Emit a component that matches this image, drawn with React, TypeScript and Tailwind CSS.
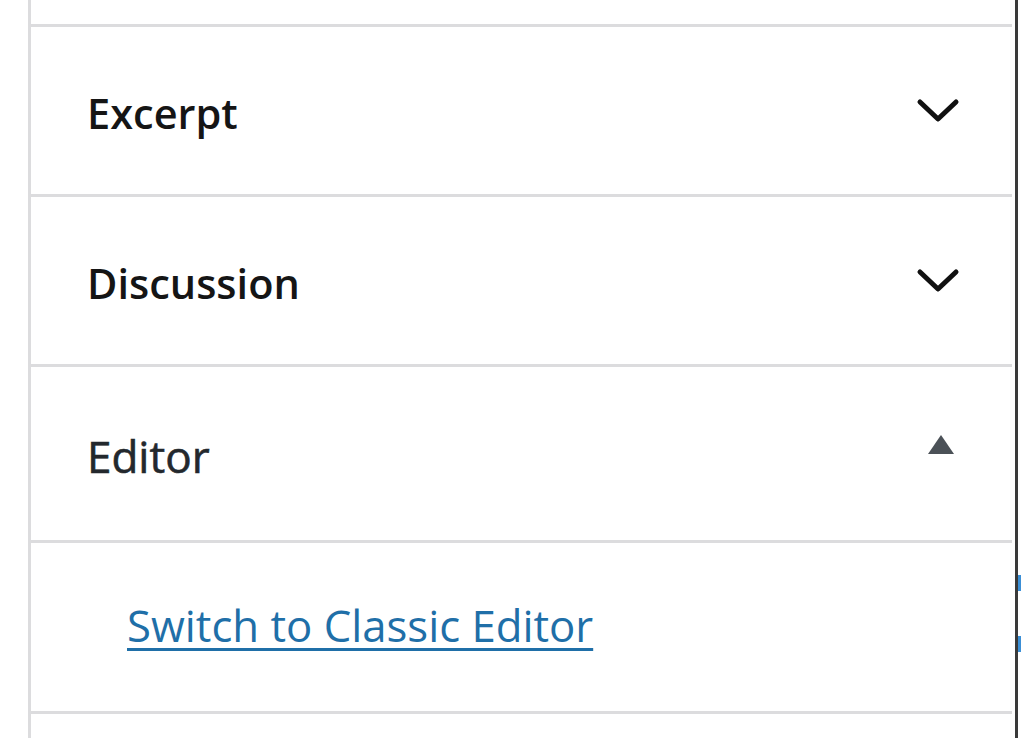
import { ReactNode } from "react"

const font = { fontFamily: '"Open Sans", "Noto Sans", "Liberation Sans", sans-serif' }

function Chevron() {
  return (
    <svg width="44" height="26" viewBox="0 0 44 26" className="shrink-0">
      <path d="M4 4 L22 21 L40 4" fill="none" stroke="#111" strokeWidth="5" strokeLinecap="round" strokeLinejoin="round" />
    </svg>
  )
}

function Triangle() {
  return (
    <svg width="30" height="22" viewBox="0 0 30 22" className="shrink-0">
      <path d="M15 2 L28 21 L2 21 Z" fill="#4b5157" />
    </svg>
  )
}

function PanelRow({ title, icon }: { title: string; icon: ReactNode }) {
  return (
    <div className="h-[170px] shrink-0 flex items-center justify-between pl-[56px] pr-[52px] border-b-[3px] border-[#dcdcde]">
      <span className="text-[41.5px] font-semibold text-[#151515] pt-[5px]">{title}</span>
      {icon}
    </div>
  )
}

export default function App() {
  return (
    <div className="w-[1024px] h-[738px] overflow-hidden bg-white flex" style={font}>
      <div className="w-[28px] shrink-0" />
      <div className="w-[984px] shrink-0 flex flex-col border-l-[3px] border-[#dcdcde]">
        <div className="h-[27px] shrink-0 border-b-[3px] border-[#dcdcde]" />
        <PanelRow title="Excerpt" icon={<Chevron />} />
        <PanelRow title="Discussion" icon={<Chevron />} />
        <div className="h-[176px] shrink-0 flex items-center justify-between pl-[56px] pr-[56px] border-b-[3px] border-[#dcdcde]">
          <span className="text-[44px] text-[#23282d] pt-[5px] [-webkit-text-stroke:0.6px_#23282d]">Editor</span>
          <div className="self-start pt-[66px]">
            <Triangle />
          </div>
        </div>
        <div className="h-[171px] shrink-0 flex items-center pl-[96px] border-b-[3px] border-[#dcdcde]">
          <a href="#" className="text-[43.7px] text-[#1f6fa8] underline decoration-[3px] underline-offset-[6px] pb-[2px]">
            Switch to Classic Editor
          </a>
        </div>
        <div className="flex-1" />
      </div>
      <div className="w-[3px] shrink-0" />
      <div className="w-[3px] shrink-0 bg-[#3a3a3a]" />
      <div className="flex-1 flex flex-col">
        <div className="h-[575px] shrink-0" />
        <div className="h-[16px] w-[3px] bg-[#3b8fd6]" />
        <div className="h-[45px] shrink-0" />
        <div className="h-[16px] w-[3px] bg-[#3b8fd6]" />
      </div>
    </div>
  )
}
